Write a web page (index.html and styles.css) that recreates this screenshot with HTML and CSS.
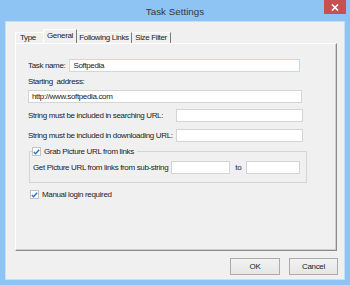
FILE: index.html
```html
<!DOCTYPE html>
<html>
<head>
<meta charset="utf-8">
<link rel="stylesheet" href="styles.css">
</head>
<body>
<div class="window">
  <div class="titlebar">
    <span class="title">Task Settings</span>
    <div class="close"><svg width="8" height="7" viewBox="0 0 8 7"><path d="M1 0.5L7 6.5M7 0.5L1 6.5" stroke="#fff" stroke-width="1.6"/></svg></div>
  </div>
  <div class="client">
    <div class="tabs">
      <div class="tab t1">Type</div>
      <div class="tab t2 active">General</div>
      <div class="tab t3">Following Links</div>
      <div class="tab t4">Size Filter</div>
    </div>
    <div class="panel">
      <div class="row r1"><span class="lbl">Task name:</span><div class="input focus grow">Softpedia</div></div>
      <div class="lbl r2">Starting&nbsp; address:</div>
      <div class="input full">http://www.softpedia.com</div>
      <div class="row r3"><span class="lbl">String must be included in searching URL:</span><div class="input w127"></div></div>
      <div class="row r4"><span class="lbl">String must be included in downloading URL:</span><div class="input w127"></div></div>
      <fieldset class="group">
        <legend><span class="cb"><svg width="7" height="6" viewBox="0 0 7 6"><path d="M0.8 3L2.6 4.8L6.2 0.8" fill="none" stroke="#2b6fd0" stroke-width="1.4"/></svg></span>Grab Picture URL from links</legend>
        <div class="row sub-row"><span class="lbl">Get Picture URL from links from sub-string</span><div class="input sub1"></div><span class="lbl to">to</span><div class="input sub2"></div></div>
      </fieldset>
      <div class="check-row"><span class="cb"><svg width="7" height="6" viewBox="0 0 7 6"><path d="M0.8 3L2.6 4.8L6.2 0.8" fill="none" stroke="#2b6fd0" stroke-width="1.4"/></svg></span>Manual login required</div>
    </div>
    <div class="buttons">
      <div class="btn ok">OK</div>
      <div class="btn cancel">Cancel</div>
    </div>
  </div>
</div>
</body>
</html>
```

FILE: styles.css
```css
html, body {
  margin: 0;
  padding: 0;
}
body {
  width: 350px;
  height: 285px;
  background: #8ec4f3;
  font-family: "Liberation Sans", Arial, sans-serif;
  font-size: 8px;
  letter-spacing: -0.35px;
  color: #222;
  overflow: hidden;
}
.window {
  width: 350px;
  height: 285px;
  display: flex;
  flex-direction: column;
}
.titlebar {
  height: 21px;
  display: flex;
  justify-content: center;
  align-items: center;
  position: relative;
}
.title {
  font-size: 9.8px;
  letter-spacing: 0;
  color: #33383f;
  margin-top: 1px;
}
.close {
  position: absolute;
  right: 4px;
  top: 0;
  width: 22px;
  height: 14px;
  background: #c75050;
  display: flex;
  align-items: center;
  justify-content: center;
}
.client {
  margin: 0 5px;
  height: 259px;
  background: #f0f0f0;
  border: 1px solid #c8def3;
  box-sizing: border-box;
  padding: 7px 0 0 9px;
  display: flex;
  flex-direction: column;
}
.tabs {
  display: flex;
  align-items: flex-end;
  height: 14px;
}
.tab {
  height: 10px;
  line-height: 10px;
  box-sizing: content-box;
  white-space: nowrap;
  text-align: center;
  border-top: 1px solid #fff;
  border-right: 1px solid #7a7a7a;
}
.t1 {
  width: 28px;
  border-left: 1px solid #fff;
  border-right: none;
  text-align: left;
  padding-left: 4px;
  box-sizing: border-box;
  height: 11px;
}
.t2 {
  width: 32px;
  height: 13px;
  line-height: 12px;
  background: #f0f0f0;
  border-left: 1px solid #fff;
}
.t3 {
  width: 54px;
}
.t4 {
  width: 38px;
}
.panel {
  width: 322px;
  height: 208px;
  box-sizing: border-box;
  border-left: 1px solid #fff;
  border-top: 1px solid #fff;
  border-right: 1px solid #8a8a8a;
  border-bottom: 1px solid #8a8a8a;
  box-shadow: inset -1px -1px 0 #cfcfcf;
  padding: 15px 0 0 12px;
  display: flex;
  flex-direction: column;
}
.row {
  display: flex;
  align-items: center;
}
.lbl {
  white-space: nowrap;
  line-height: 13px;
}
.input {
  height: 13px;
  box-sizing: border-box;
  background: #fff;
  border: 1px solid #d4d4d4;
  padding: 0 3px;
  line-height: 11px;
  white-space: nowrap;
}
.input.focus {
  border-color: #c3daf5;
}
.r1 .grow {
  width: 231px;
  margin-left: 4px;
}
.r2 {
  margin-top: 3px;
}
.input.full {
  width: 274px;
  margin-top: 2px;
}
.r3 {
  margin-top: 6px;
  justify-content: space-between;
  width: 275px;
}
.r4 {
  margin-top: 7px;
  justify-content: space-between;
  width: 275px;
}
.w127 {
  width: 127px;
}
.group {
  margin: 4px 0 0 1px;
  width: 278px;
  height: 37px;
  box-sizing: border-box;
  border: 1px solid #d5d5d5;
  padding: 4px 0 0 3px;
}
.group legend {
  padding: 0 3px 0 0;
  margin-left: -1px;
  display: flex;
  align-items: center;
  line-height: 11px;
}
.cb {
  width: 9px;
  height: 9px;
  box-sizing: border-box;
  border: 1px solid #c3c3c3;
  background: #fff;
  display: inline-flex;
  align-items: center;
  justify-content: center;
  margin-right: 3px;
}
.sub1 {
  width: 59px;
  margin-left: 3px;
}
.to {
  margin: 0 5px;
}
.sub2 {
  width: 54px;
}
.check-row {
  display: flex;
  align-items: center;
  margin: 6px 0 0 2px;
  line-height: 11px;
}
.buttons {
  display: flex;
  justify-content: flex-end;
  gap: 9px;
  margin-top: 7px;
  padding-right: 6px;
}
.btn {
  height: 17px;
  box-sizing: border-box;
  border: 1px solid #acacac;
  background: linear-gradient(#f2f2f2, #e6e6e6);
  display: flex;
  align-items: center;
  justify-content: center;
}
.ok { width: 50px; }
.cancel { width: 49px; }
```
